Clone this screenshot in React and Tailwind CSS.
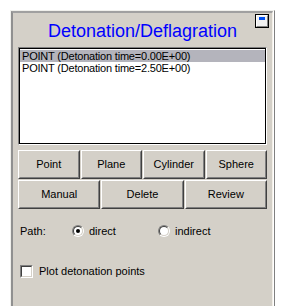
import React from "react";

function Btn({ children, className = "" }) {
  return (
    <div className={"border border-t-white border-l-white border-r-[#404040] border-b-[#404040] bg-[#d4d0c8] " + className}>
      <div className="w-full h-full border border-t-[#d4d0c8] border-l-[#d4d0c8] border-r-[#808080] border-b-[#808080] flex items-center justify-center text-[11px] text-black">
        {children}
      </div>
    </div>
  );
}

function Radio({ checked }) {
  return (
    <div className="w-[12px] h-[12px] rounded-full border border-t-[#808080] border-l-[#808080] border-r-white border-b-white">
      <div className="w-full h-full rounded-full border border-t-[#404040] border-l-[#404040] border-r-[#d4d0c8] border-b-[#d4d0c8] bg-white flex items-center justify-center">
        {checked && <div className="w-[4px] h-[4px] rounded-full bg-black" />}
      </div>
    </div>
  );
}

export default function App() {
  return (
    <div className="w-[289px] h-[306px] bg-white overflow-hidden font-['Liberation_Sans',Arial,sans-serif] pt-[10px] pl-[10px]">
      <div className="w-[265px] h-[310px] border-t border-l border-t-[#f0f0ec] border-l-[#f0f0ec] border-r border-r-[#808080] pr-[1px] bg-white">
        <div className="relative w-full h-full bg-[#d4d0c8] border-t-2 border-l-2 border-t-[#a0a0a0] border-l-[#909090] border-r border-r-[#f4f0e8] pl-[5px] pr-[5px]">
          <div className="absolute right-[3px] top-[1px] w-[14px] h-[14px] border border-black bg-[#d4d0c8]">
            <div className="w-full h-full border border-t-white border-l-white border-r-[#808080] border-b-[#808080] bg-[#f0f0f0] px-[2px] pt-[1px]">
              <div className="h-[3px] bg-[#0050f0]" />
            </div>
          </div>
          <div className="h-[34px] flex items-center justify-center text-[18px] text-[#0000ff] leading-none pt-[2px]">
            Detonation/Deflagration
          </div>
          <div className="h-[98px] border border-t-[#808080] border-l-[#808080] border-r-white border-b-white">
            <div className="w-full h-full border border-black bg-white pt-[1px] text-[11px] leading-[12px] tracking-[-0.2px] text-black">
              <div className="bg-[#b4b4bc] pl-[2px] h-[12px]">POINT (Detonation time=0.00E+00)</div>
              <div className="pl-[2px] h-[12px]">POINT (Detonation time=2.50E+00)</div>
            </div>
          </div>
          <div className="mt-[5px] flex gap-[1px]">
            <Btn className="flex-1 h-[29px]">Point</Btn>
            <Btn className="flex-1 h-[29px]">Plane</Btn>
            <Btn className="flex-1 h-[29px]">Cylinder</Btn>
            <Btn className="flex-1 h-[29px]">Sphere</Btn>
          </div>
          <div className="mt-[1px] flex gap-[1px]">
            <Btn className="flex-1 h-[29px]">Manual</Btn>
            <Btn className="flex-1 h-[29px]">Delete</Btn>
            <Btn className="flex-1 h-[29px]">Review</Btn>
          </div>
          <div className="mt-[15px] flex items-center h-[14px] text-[11px] text-black pl-[2px]">
            <span className="w-[52px]">Path:</span>
            <Radio checked />
            <span className="ml-[5px] w-[69px]">direct</span>
            <Radio />
            <span className="ml-[5px]">indirect</span>
          </div>
          <div className="mt-[26px] flex items-center h-[14px] text-[11px] text-black pl-[2px]">
            <div className="w-[13px] h-[13px] border border-t-[#808080] border-l-[#808080] border-r-white border-b-white">
              <div className="w-full h-full border border-t-[#404040] border-l-[#404040] border-r-[#d4d0c8] border-b-[#d4d0c8] bg-white" />
            </div>
            <span className="ml-[6px]">Plot detonation points</span>
          </div>
        </div>
      </div>
    </div>
  );
}
